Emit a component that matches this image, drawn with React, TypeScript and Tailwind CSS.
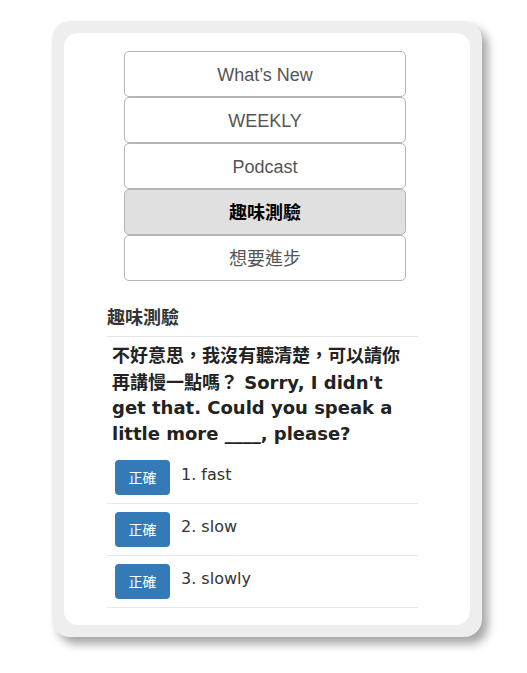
import React from 'react';

const navItems = ['What\u2019s New', 'WEEKLY', 'Podcast', '趣味測驗', '想要進步'];
const options = ['1. fast', '2. slow', '3. slowly'];

const App = () => {
  return (
    <div className="w-[527px] h-[673px] bg-white pt-[21px] pl-[52px]">
      <div className="w-[430px] h-[616px] rounded-[18px] bg-[#eeeeee] p-[12px] shadow-[6px_7px_10px_rgba(0,0,0,0.35)]">
        <div className="h-full rounded-[14px] bg-white pt-[18px]">
          <div className="ml-[60px] w-[282px] flex flex-col font-['Liberation_Sans','Noto_Sans_CJK_TC',sans-serif] text-[18px]">
            {navItems.map((item, i) => (
              <div
                key={item}
                className={
                  i === 3
                    ? 'h-[46px] pt-[3px] flex items-center justify-center rounded-[5px] border border-[#b5b5b5] bg-[#e0e0e0] font-bold text-black'
                    : 'h-[46px] pt-[3px] flex items-center justify-center rounded-[5px] border border-[#b5b5b5] bg-white text-[#555]'
                }
              >
                {item}
              </div>
            ))}
          </div>

          <div className="ml-[43px] w-[311px] mt-[24px] font-['DejaVu_Sans','Noto_Sans_CJK_TC',sans-serif] text-[#333]">
            <div className="pb-[9px] border-b border-[#e5e5e5] font-['Noto_Sans_CJK_TC',sans-serif] font-bold text-[18px] leading-[22px] text-[#333]">
              趣味測驗
            </div>
            <p className="pl-[5px] pr-[10px] pt-[5px] pb-[6px] font-bold text-[18px] leading-[25.5px] text-[#222]">
              <span className="font-['Noto_Sans_CJK_TC',sans-serif]">不好意思，我沒有聽清楚，可以請你再講慢一點嗎？</span> Sorry, I didn't get that. Could you speak a little more ____, please?
            </p>
            {options.map((opt) => (
              <div key={opt} className="flex items-center gap-[11px] pl-[8px] py-[8px] border-b border-[#e8e8e8]">
                <button className="w-[55px] h-[35px] rounded-[4px] bg-[#337ab7] text-white text-[14px] font-['Noto_Sans_CJK_TC',sans-serif]">
                  正確
                </button>
                <span className="text-[16px] text-[#333] -mt-[5px]">{opt}</span>
              </div>
            ))}
          </div>
        </div>
      </div>
    </div>
  );
};

export default App;
